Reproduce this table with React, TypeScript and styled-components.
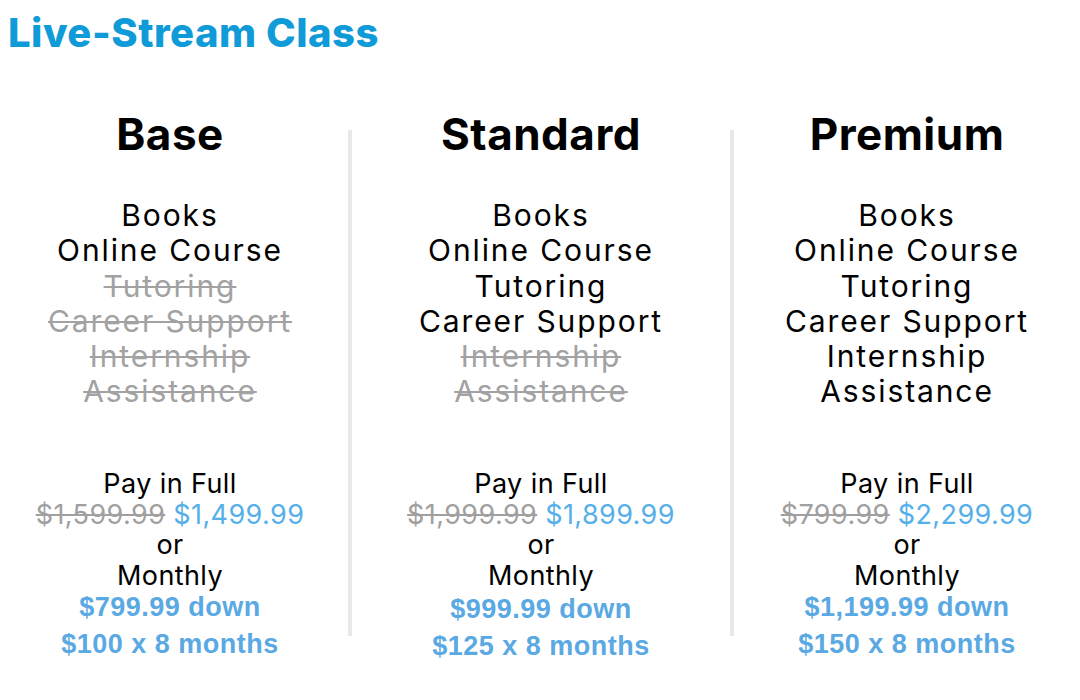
import styled, { createGlobalStyle } from 'styled-components';

const GlobalStyle = createGlobalStyle`
  html, body {
    margin: 0;
    padding: 0;
    background: #fff;
  }
  body {
    font-family: 'Inter', 'Noto Sans', sans-serif;
    color: #000;
  }
`;

const Page = styled.div`
  width: 1080px;
  height: 700px;
  overflow: hidden;
  box-sizing: border-box;
  padding-top: 10px;
`;

const Title = styled.h1`
  margin: 0 0 0 8px;
  font-size: 40px;
  font-weight: 800;
  line-height: 46px;
  letter-spacing: 0.5px;
  color: #0f9bd7;
`;

const Plans = styled.div`
  display: grid;
  grid-template-columns: 340px 12px 378px 4px 1fr;
  margin-top: 52px;
`;

const Divider = styled.div`
  justify-self: end;
  width: 4px;
  background: #e9e9e9;
  margin-top: 22px;
  height: 506px;
`;

const Column = styled.div`
  display: flex;
  flex-direction: column;
  align-items: center;
  text-align: center;
`;

const PlanName = styled.h2`
  margin: 0;
  font-size: 44px;
  font-weight: 700;
  line-height: 52px;
  letter-spacing: 0.5px;
`;

const Features = styled.ul`
  list-style: none;
  margin: 38px 0 0;
  padding: 0;
`;

const Feature = styled.li<{ $off?: boolean }>`
  font-size: 30px;
  line-height: 35.3px;
  letter-spacing: 1.9px;
  white-space: nowrap;
  color: ${(p) => (p.$off ? '#a2a2a2' : '#000')};
  text-decoration: ${(p) => (p.$off ? 'line-through' : 'none')};
  text-decoration-thickness: 2px;
`;

const Pay = styled.div`
  margin-top: 59px;
  display: flex;
  flex-direction: column;
  align-items: center;
`;

const PayLine = styled.div`
  font-size: 27px;
  line-height: 30.8px;
  letter-spacing: 0.4px;
  white-space: nowrap;
`;

const OldPrice = styled.s`
  color: #a0a0a0;
  text-decoration-thickness: 2px;
`;

const NewPrice = styled.span`
  color: #56afe8;
`;

const Monthly = styled.div<{ $gap: number }>`
  font-family: 'Liberation Sans', Arial, sans-serif;
  font-weight: 700;
  font-size: 27px;
  line-height: 31px;
  letter-spacing: 0.5px;
  white-space: nowrap;
  color: #5aa9e3;
  margin-top: ${(p) => p.$gap}px;
`;

type Plan = {
  name: string;
  included: number;
  was: string;
  now: string;
  down: string;
  months: string;
  downGap: number;
};

const features = [
  'Books',
  'Online Course',
  'Tutoring',
  'Career Support',
  'Internship',
  'Assistance',
];

const plans: Plan[] = [
  { name: 'Base', included: 2, was: '$1,599.99', now: '$1,499.99', down: '$799.99 down', months: '$100 x 8 months', downGap: 0 },
  { name: 'Standard', included: 4, was: '$1,999.99', now: '$1,899.99', down: '$999.99 down', months: '$125 x 8 months', downGap: 2 },
  { name: 'Premium', included: 6, was: '$799.99', now: '$2,299.99', down: '$1,199.99 down', months: '$150 x 8 months', downGap: 0 },
];

const PlanColumn = ({ plan }: { plan: Plan }) => (
  <Column>
    <PlanName>{plan.name}</PlanName>
    <Features>
      {features.map((f, i) => (
        <Feature key={f} $off={i >= plan.included}>
          {f}
        </Feature>
      ))}
    </Features>
    <Pay>
      <PayLine>Pay in Full</PayLine>
      <PayLine>
        <OldPrice>{plan.was}</OldPrice> <NewPrice>{plan.now}</NewPrice>
      </PayLine>
      <PayLine>or</PayLine>
      <PayLine>Monthly</PayLine>
      <Monthly $gap={plan.downGap}>{plan.down}</Monthly>
      <Monthly $gap={6}>{plan.months}</Monthly>
    </Pay>
  </Column>
);

export default function App() {
  return (
    <Page>
      <GlobalStyle />
      <Title>Live-Stream Class</Title>
      <Plans>
        <PlanColumn plan={plans[0]} />
        <Divider />
        <PlanColumn plan={plans[1]} />
        <Divider />
        <PlanColumn plan={plans[2]} />
      </Plans>
    </Page>
  );
}
